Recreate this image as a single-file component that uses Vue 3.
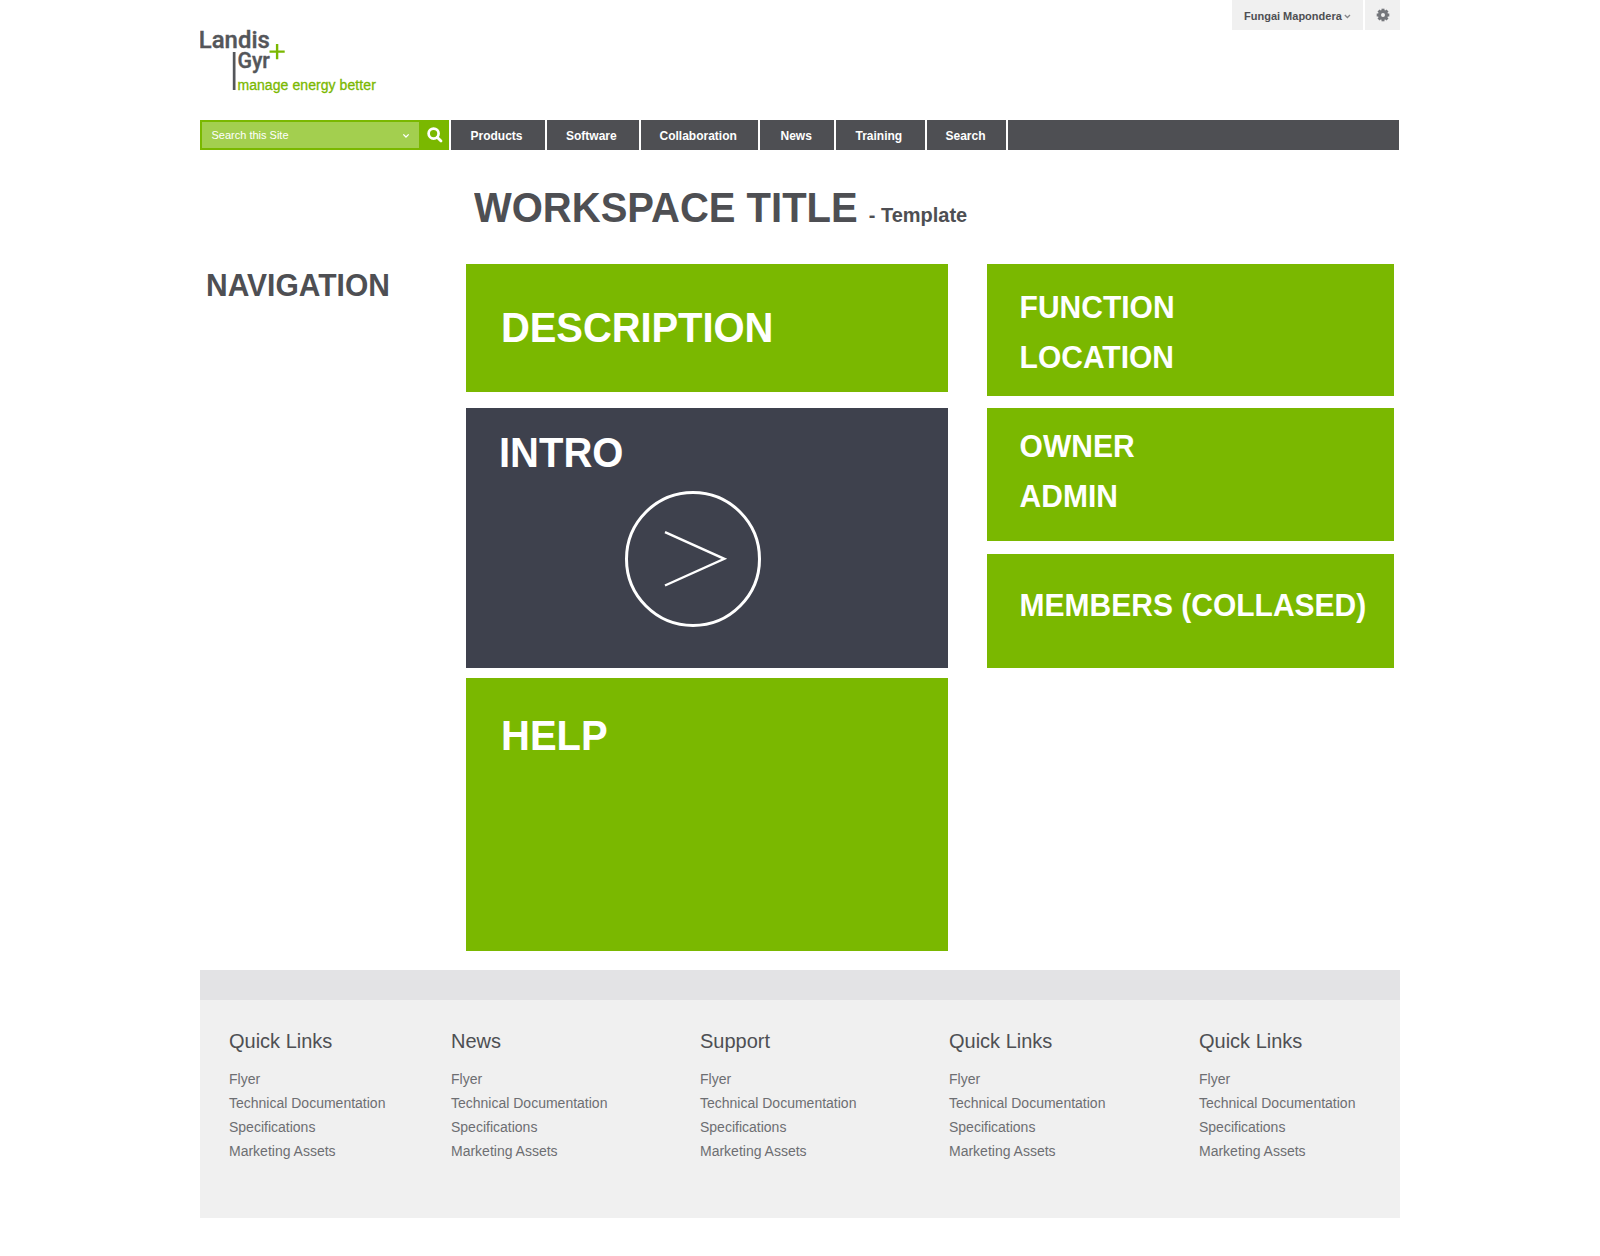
<script setup>
const navItems = [
  { label: 'Products', width: 94, pad: 19.5 },
  { label: 'Software', width: 92, pad: 19 },
  { label: 'Collaboration', width: 117, pad: 18.5 },
  { label: 'News', width: 74, pad: 20.5 },
  { label: 'Training', width: 89, pad: 19.5 },
  { label: 'Search', width: 79, pad: 18.5 },
]
const links = ['Flyer', 'Technical Documentation', 'Specifications', 'Marketing Assets']
const columns = [
  { title: 'Quick Links', width: 222 },
  { title: 'News', width: 249 },
  { title: 'Support', width: 249 },
  { title: 'Quick Links', width: 250 },
  { title: 'Quick Links', width: 190 },
]
const teeth = [0, 45, 90, 135, 180, 225, 270, 315]
</script>

<template>
  <div class="page">
    <header class="top">
      <svg class="logo" width="190" height="70" viewBox="200 26 190 70" role="img" aria-label="Landis+Gyr">
        <g class="brand">
          <text x="198.8" y="48" font-size="23.5" textLength="71" lengthAdjust="spacingAndGlyphs">Landis</text>
          <text x="237.4" y="68" font-size="22.5" textLength="32.5" lengthAdjust="spacingAndGlyphs">Gyr</text>
        </g>
        <rect x="232.8" y="52" width="2.7" height="38" fill="#54565a" />
        <path d="M269.5 51.6h15.2M277.1 44v15.2" stroke="#7ab800" stroke-width="2.4" />
        <text class="tagline" x="237.4" y="90" textLength="138.4">manage energy better</text>
      </svg>
      <div class="account">
        <div class="user">
          <span>Fungai Mapondera</span>
          <svg width="7" height="5" viewBox="0 0 7 5"><path d="M.8 1l2.6 2.5L6 1" fill="none" stroke="#85868a" stroke-width="1.3" /></svg>
        </div>
        <div class="gear">
          <svg width="14" height="14" viewBox="-7 -7 14 14">
            <rect v-for="t in teeth" :key="t" x="-1.5" y="-6.3" width="3" height="3" fill="#74767b" :transform="`rotate(${t})`" />
            <circle r="3.5" fill="none" stroke="#74767b" stroke-width="3" />
          </svg>
        </div>
      </div>
    </header>

    <nav class="bar">
      <div class="search">
        <div class="field">
          <span>Search this Site</span>
          <svg width="8" height="6" viewBox="0 0 8 6"><path d="M1.3 1.4L4 4l2.7-2.6" fill="none" stroke="#fff" stroke-width="1.3" /></svg>
        </div>
        <div class="go">
          <svg width="16" height="16" viewBox="0 0 16 16"><circle cx="6.6" cy="6.6" r="5" fill="none" stroke="#fff" stroke-width="2.7" /><path d="M10.2 10.2l3.8 3.8" stroke="#fff" stroke-width="2.8" stroke-linecap="round" /></svg>
        </div>
      </div>
      <a v-for="n in navItems" :key="n.label" :style="{ width: n.width + 'px', paddingLeft: n.pad + 'px' }">{{ n.label }}</a>
      <div class="rest"></div>
    </nav>

    <h1><span class="big">WORKSPACE TITLE</span><small>- Template</small></h1>

    <main class="workspace">
      <aside><h2 class="mid">NAVIGATION</h2></aside>
      <div class="center">
        <section class="card description"><h2 class="big">DESCRIPTION</h2></section>
        <section class="card intro">
          <h2 class="big">INTRO</h2>
          <svg class="play" width="136" height="136" viewBox="0 0 136 136">
            <circle cx="68" cy="68" r="66.5" fill="none" stroke="#fff" stroke-width="3" />
            <path d="M40 41.1L99.3 67.8L40 94.5" fill="none" stroke="#fff" stroke-width="2.4" />
          </svg>
        </section>
        <section class="card help"><h2 class="big">HELP</h2></section>
      </div>
      <div class="side">
        <section class="card function"><h3 class="mid">FUNCTION</h3><h3 class="mid">LOCATION</h3></section>
        <section class="card owner"><h3 class="mid">OWNER</h3><h3 class="mid">ADMIN</h3></section>
        <section class="card members"><h3 class="mid">MEMBERS (COLLASED)</h3></section>
      </div>
    </main>

    <footer>
      <div v-for="(c, i) in columns" :key="i" :style="{ width: c.width + 'px' }">
        <h4>{{ c.title }}</h4>
        <ul><li v-for="l in links" :key="l">{{ l }}</li></ul>
      </div>
    </footer>
  </div>
</template>

<style>
body { margin: 0; background: #fff; }
</style>

<style scoped>
* { box-sizing: border-box; }
h1, h2, h3, h4, ul { margin: 0; padding: 0; }
svg { display: block; }
.page {
  width: 1200px;
  height: 1256px;
  margin: 0 auto;
  font-family: "Liberation Sans", Arial, sans-serif;
  color: #4e4f53;
}
.top { display: flex; justify-content: space-between; height: 120px; }
.logo { margin-top: 26px; }
.brand { font-family: Roboto, sans-serif; font-weight: 500; fill: #54565a; stroke: #54565a; stroke-width: .4px; }
.tagline { font-size: 14px; fill: #7ab800; stroke: #7ab800; stroke-width: .3px; }
.account { display: flex; gap: 2px; height: 30px; }
.user {
  display: flex;
  align-items: center;
  gap: 2px;
  width: 131px;
  padding: 2px 0 0 12px;
  background: #f0f0f0;
  font-size: 11px;
  font-weight: bold;
  white-space: nowrap;
}
.gear { display: flex; align-items: center; justify-content: center; width: 35px; padding-left: 1px; background: #f0f0f0; }

.bar { display: flex; gap: 2px; width: 1199px; height: 30px; }
.search { display: flex; width: 249px; padding: 2px 0 2px 2px; background: #7ab800; }
.field {
  display: flex;
  align-items: center;
  justify-content: space-between;
  width: 217px;
  padding: 0 9px 0 9.5px;
  background: #a3cf4f;
  color: #fff;
  font-size: 11px;
}
.field svg { margin-top: 2px; }
.go { padding: 5px 0 0 7.5px; }
.bar a { flex: none; background: #4e4f53; color: #fff; font-size: 12px; font-weight: bold; line-height: 32px; height: 30px; }
.rest { flex: 1; background: #4e4f53; }

.big { font-size: 40px; font-weight: bold; line-height: 46px; transform: scaleY(1.05); transform-origin: 0 37px; }
.mid { font-size: 30px; font-weight: bold; line-height: 50px; transform: scaleY(1.05); transform-origin: 0 36px; }
h1 { display: flex; align-items: baseline; height: 114px; padding: 35px 0 0 274px; }
h1 .big { display: block; }
h1 small { margin-left: 11px; font-size: 20px; transform: scaleY(1.04); }

.workspace { display: grid; grid-template-columns: 266px 482px 407px; height: 706px; }
.side { margin-left: 39px; width: 407px; }
aside { padding: 0 0 0 6px; margin-top: -3px; }
.center, .side { display: flex; flex-direction: column; }
.card { background: #7ab800; color: #fff; }
.description { height: 128px; padding: 41px 0 0 35px; }
.description .big { letter-spacing: -.1px; }
.intro { height: 260px; margin-top: 16px; padding: 22px 0 0 33px; background: #3e414d; }
.play { margin: 15px 0 0 126px; }
.help { height: 273px; margin-top: 10px; padding: 35px 0 0 35px; }
.side .card { padding-left: 32.6px; }
.function { height: 132px; padding-top: 19px; }
.owner { height: 133px; margin-top: 12px; padding-top: 14px; }
.members { height: 114px; margin-top: 13px; padding-top: 27px; white-space: nowrap; }

footer { display: flex; height: 248px; padding: 28px 0 0 29px; border-top: 30px solid #e3e3e5; background: #f0f0f0; }
h4 { font-size: 20px; font-weight: normal; line-height: 26px; }
ul { padding-top: 13px; list-style: none; }
li { color: #6d6e72; font-size: 14px; line-height: 24px; }
</style>
